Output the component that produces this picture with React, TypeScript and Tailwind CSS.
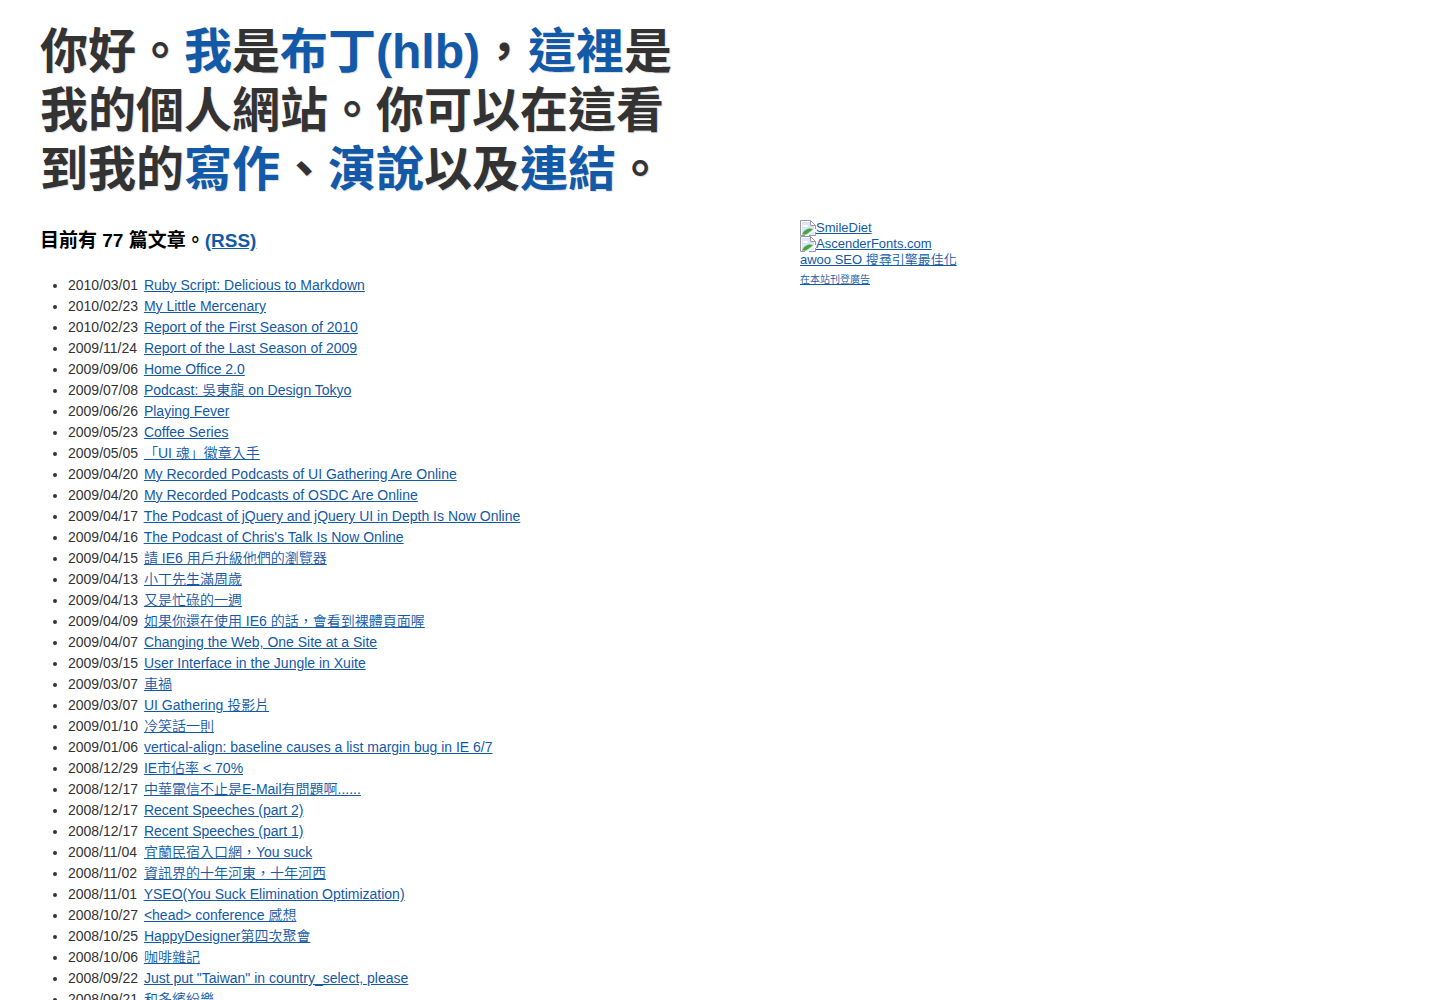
type Article = { date: string; title: string }

const ARTICLES: Article[] = [
  { date: '2010/03/01', title: 'Ruby Script: Delicious to Markdown' },
  { date: '2010/02/23', title: 'My Little Mercenary' },
  { date: '2010/02/23', title: 'Report of the First Season of 2010' },
  { date: '2009/11/24', title: 'Report of the Last Season of 2009' },
  { date: '2009/09/06', title: 'Home Office 2.0' },
  { date: '2009/07/08', title: 'Podcast: 吳東龍 on Design Tokyo' },
  { date: '2009/06/26', title: 'Playing Fever' },
  { date: '2009/05/23', title: 'Coffee Series' },
  { date: '2009/05/05', title: '「UI 魂」徽章入手' },
  { date: '2009/04/20', title: 'My Recorded Podcasts of UI Gathering Are Online' },
  { date: '2009/04/20', title: 'My Recorded Podcasts of OSDC Are Online' },
  { date: '2009/04/17', title: 'The Podcast of jQuery and jQuery UI in Depth Is Now Online' },
  { date: '2009/04/16', title: "The Podcast of Chris's Talk Is Now Online" },
  { date: '2009/04/15', title: '請 IE6 用戶升級他們的瀏覽器' },
  { date: '2009/04/13', title: '小丁先生滿周歲' },
  { date: '2009/04/13', title: '又是忙碌的一週' },
  { date: '2009/04/09', title: '如果你還在使用 IE6 的話，會看到裸體頁面喔' },
  { date: '2009/04/07', title: 'Changing the Web, One Site at a Site' },
  { date: '2009/03/15', title: 'User Interface in the Jungle in Xuite' },
  { date: '2009/03/07', title: '車禍' },
  { date: '2009/03/07', title: 'UI Gathering 投影片' },
  { date: '2009/01/10', title: '冷笑話一則' },
  { date: '2009/01/06', title: 'vertical-align: baseline causes a list margin bug in IE 6/7' },
  { date: '2008/12/29', title: 'IE市佔率 < 70%' },
  { date: '2008/12/17', title: '中華電信不止是E-Mail有問題啊......' },
  { date: '2008/12/17', title: 'Recent Speeches (part 2)' },
  { date: '2008/12/17', title: 'Recent Speeches (part 1)' },
  { date: '2008/11/04', title: '宜蘭民宿入口網，You suck' },
  { date: '2008/11/02', title: '資訊界的十年河東，十年河西' },
  { date: '2008/11/01', title: 'YSEO(You Suck Elimination Optimization)' },
  { date: '2008/10/27', title: '<head> conference 感想' },
  { date: '2008/10/25', title: 'HappyDesigner第四次聚會' },
  { date: '2008/10/06', title: '咖啡雜記' },
  { date: '2008/09/22', title: 'Just put "Taiwan" in country_select, please' },
  { date: '2008/09/21', title: '和多繽紛樂' },
]

function MissingImage() {
  return (
    <svg className="inline-block w-4 h-4 align-top" viewBox="0 0 16 16" aria-hidden="true">
      <path d="M0.5 15.5V0.5H10.5L15.5 5.5V9" fill="none" stroke="#9a9a9a" />
      <path d="M2 2h8v4h4v3l-7 6H2z" fill="#dbe5f8" />
      <path d="M3 7a1.500 1.500 0 0 1 2-2 2 2 0 0 1 3 2z" fill="#fff" />
      <path d="M10.5 0.5v5h5z" fill="#fff" stroke="#9a9a9a" />
      <path d="M2 14.500C4 10 9 7 13 9.500L6 14.500z" fill="#45a83a" />
      <path d="M0.5 15.500H5M9 15.500h6.500V12" fill="none" stroke="#9a9a9a" />
      <path d="M9 14.500L14.500 11v3.500z" fill="#dbe5f8" />
    </svg>
  )
}

export default function App() {
  return (
    <div
      lang="zh-Hant"
      className="grid grid-cols-2 px-10 pt-[22px] text-[#333] font-['Liberation_Sans','Noto_Sans_CJK_TC',sans-serif]"
    >
      <h1 className="col-span-2 max-w-[640px] text-5xl leading-[59px] font-bold [text-shadow:1px_1px_1px_#ddd] [&_a]:text-[#1259a8]">
        你好。<a href="#about">我</a>是<a href="#hlb">布丁(hlb)</a>，<a href="#site">這裡</a>是我的個人網站。你可以在這看到我的
        <a href="#writing">寫作</a>、<a href="#talks">演說</a>以及<a href="#links">連結</a>。
      </h1>

      {/* Articles */}
      <main className="pt-7">
        <h2 className="text-[19px] leading-7 font-bold text-black">
          目前有 77 篇文章。<a href="#rss" className="text-[#1259a8] underline">(RSS)</a>
        </h2>
        <ul className="mt-5 pl-7 list-disc text-sm leading-[21px] font-[350]">
          {ARTICLES.map((a, i) => (
            <li key={i}>
              <span className="inline-block w-18">{a.date}</span>{' '}
              <a href={`#article-${i}`} className="text-[#1259a8] underline">{a.title}</a>
            </li>
          ))}
        </ul>
      </main>

      {/* Ads */}
      <aside className="flex flex-col items-start pl-20 pt-[21px] text-[13px] leading-4 font-[350] [&_a]:text-[#1259a8] [&_a]:underline">
        <a href="#smilediet"><MissingImage />SmileDiet</a>
        <a href="#ascenderfonts"><MissingImage />AscenderFonts.com</a>
        <a href="#awoo">awoo SEO 搜尋引擎最佳化</a>
        <a href="#advertise" className="mt-1 text-[10px]">在本站刊登廣告</a>
      </aside>
    </div>
  )
}
